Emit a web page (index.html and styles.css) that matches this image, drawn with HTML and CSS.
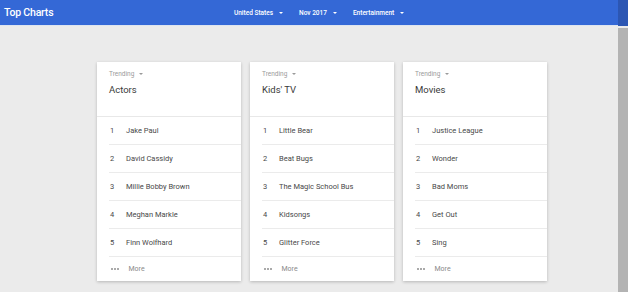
FILE: index.html
```html
<!DOCTYPE html>
<html>
<head>
<meta charset="utf-8">
<link rel="stylesheet" href="styles.css">
</head>
<body>
<div class="page">
  <div class="main">
    <header class="topbar">
      <div class="brand">Top Charts</div>
      <nav class="nav">
        <div class="nav-item">United States <span class="caret"></span></div>
        <div class="nav-item">Nov 2017 <span class="caret"></span></div>
        <div class="nav-item">Entertainment <span class="caret"></span></div>
      </nav>
    </header>
    <div class="cards">
      <section class="card">
        <div class="card-head">
          <div class="trend">Trending <span class="caret small"></span></div>
          <div class="title">Actors</div>
        </div>
        <ol class="list">
          <li class="row"><span class="num">1</span><span class="name">Jake Paul</span></li>
          <li class="row"><span class="num">2</span><span class="name">David Cassidy</span></li>
          <li class="row"><span class="num">3</span><span class="name">Millie Bobby Brown</span></li>
          <li class="row"><span class="num">4</span><span class="name">Meghan Markle</span></li>
          <li class="row"><span class="num">5</span><span class="name">Finn Wolfhard</span></li>
        </ol>
        <div class="more"><span class="dots"><i></i><i></i><i></i></span><span>More</span></div>
      </section>
      <section class="card">
        <div class="card-head">
          <div class="trend">Trending <span class="caret small"></span></div>
          <div class="title">Kids' TV</div>
        </div>
        <ol class="list">
          <li class="row"><span class="num">1</span><span class="name">Little Bear</span></li>
          <li class="row"><span class="num">2</span><span class="name">Beat Bugs</span></li>
          <li class="row"><span class="num">3</span><span class="name">The Magic School Bus</span></li>
          <li class="row"><span class="num">4</span><span class="name">Kidsongs</span></li>
          <li class="row"><span class="num">5</span><span class="name">Glitter Force</span></li>
        </ol>
        <div class="more"><span class="dots"><i></i><i></i><i></i></span><span>More</span></div>
      </section>
      <section class="card">
        <div class="card-head">
          <div class="trend">Trending <span class="caret small"></span></div>
          <div class="title">Movies</div>
        </div>
        <ol class="list">
          <li class="row"><span class="num">1</span><span class="name">Justice League</span></li>
          <li class="row"><span class="num">2</span><span class="name">Wonder</span></li>
          <li class="row"><span class="num">3</span><span class="name">Bad Moms</span></li>
          <li class="row"><span class="num">4</span><span class="name">Get Out</span></li>
          <li class="row"><span class="num">5</span><span class="name">Sing</span></li>
        </ol>
        <div class="more"><span class="dots"><i></i><i></i><i></i></span><span>More</span></div>
      </section>
    </div>
  </div>
  <div class="scrollbar">
    <div class="scroll-top"></div>
    <div class="scroll-thumb"></div>
  </div>
</div>
</body>
</html>
```

FILE: styles.css
```css
html, body {
  margin: 0;
  padding: 0;
  height: 100%;
  overflow: hidden;
}
body {
  font-family: Roboto, "Liberation Sans", sans-serif;
  background: #ebebeb;
}
.page {
  display: flex;
  height: 292px;
}
.main {
  flex: 1;
  display: flex;
  flex-direction: column;
}
.topbar {
  height: 25px;
  background: #3468d6;
  border-bottom: 1px solid #dde4ef;
  display: flex;
  align-items: center;
  color: #fff;
  box-sizing: content-box;
}
.brand {
  width: 230px;
  padding-left: 4px;
  font-size: 10.5px;
  font-weight: 500;
  letter-spacing: -0.2px;
}
.nav {
  display: flex;
  gap: 16px;
}
.nav-item {
  font-size: 6.5px;
  font-weight: 500;
  display: flex;
  align-items: center;
  gap: 6px;
  padding-top: 1px;
}
.caret {
  display: inline-block;
  width: 0;
  height: 0;
  border-left: 2.5px solid transparent;
  border-right: 2.5px solid transparent;
  border-top: 2.5px solid currentColor;
}
.caret.small {
  margin-left: 3px;
  vertical-align: middle;
}
.cards {
  display: flex;
  gap: 9px;
  padding: 36px 0 0 97px;
}
.card {
  width: 144px;
  background: #fff;
  box-shadow: 0 1px 3px rgba(0, 0, 0, 0.22);
  display: flex;
  flex-direction: column;
}
.card-head {
  height: 55px;
  box-sizing: border-box;
  padding: 7px 12px 0;
  border-bottom: 1px solid #e8e8e8;
}
.trend {
  font-size: 6.5px;
  line-height: 10px;
  color: #9a9a9a;
}
.title {
  margin-top: 5px;
  font-size: 9.5px;
  line-height: 12px;
  color: #3a3a3a;
}
.list {
  list-style: none;
  margin: 0;
  padding: 0;
}
.row {
  margin-left: 12px;
  height: 27px;
  border-bottom: 1px solid #ebebeb;
  display: flex;
  align-items: center;
  font-size: 7.5px;
  color: #484848;
}
.num {
  width: 16px;
  padding-left: 1px;
}
.more {
  height: 24px;
  display: flex;
  align-items: center;
  padding-left: 14px;
  font-size: 7px;
  color: #8a8a8a;
  gap: 10px;
}
.dots {
  display: flex;
  gap: 1.5px;
}
.dots i {
  display: block;
  width: 1.5px;
  height: 1.5px;
  border-radius: 50%;
  background: #9a9a9a;
}
.scrollbar {
  width: 10px;
  display: flex;
  flex-direction: column;
}
.scroll-top {
  height: 26px;
  background: #2c56b3;
}
.scroll-thumb {
  flex: 1;
  background: #b3b3b3;
  margin-top: 2px;
}
```
